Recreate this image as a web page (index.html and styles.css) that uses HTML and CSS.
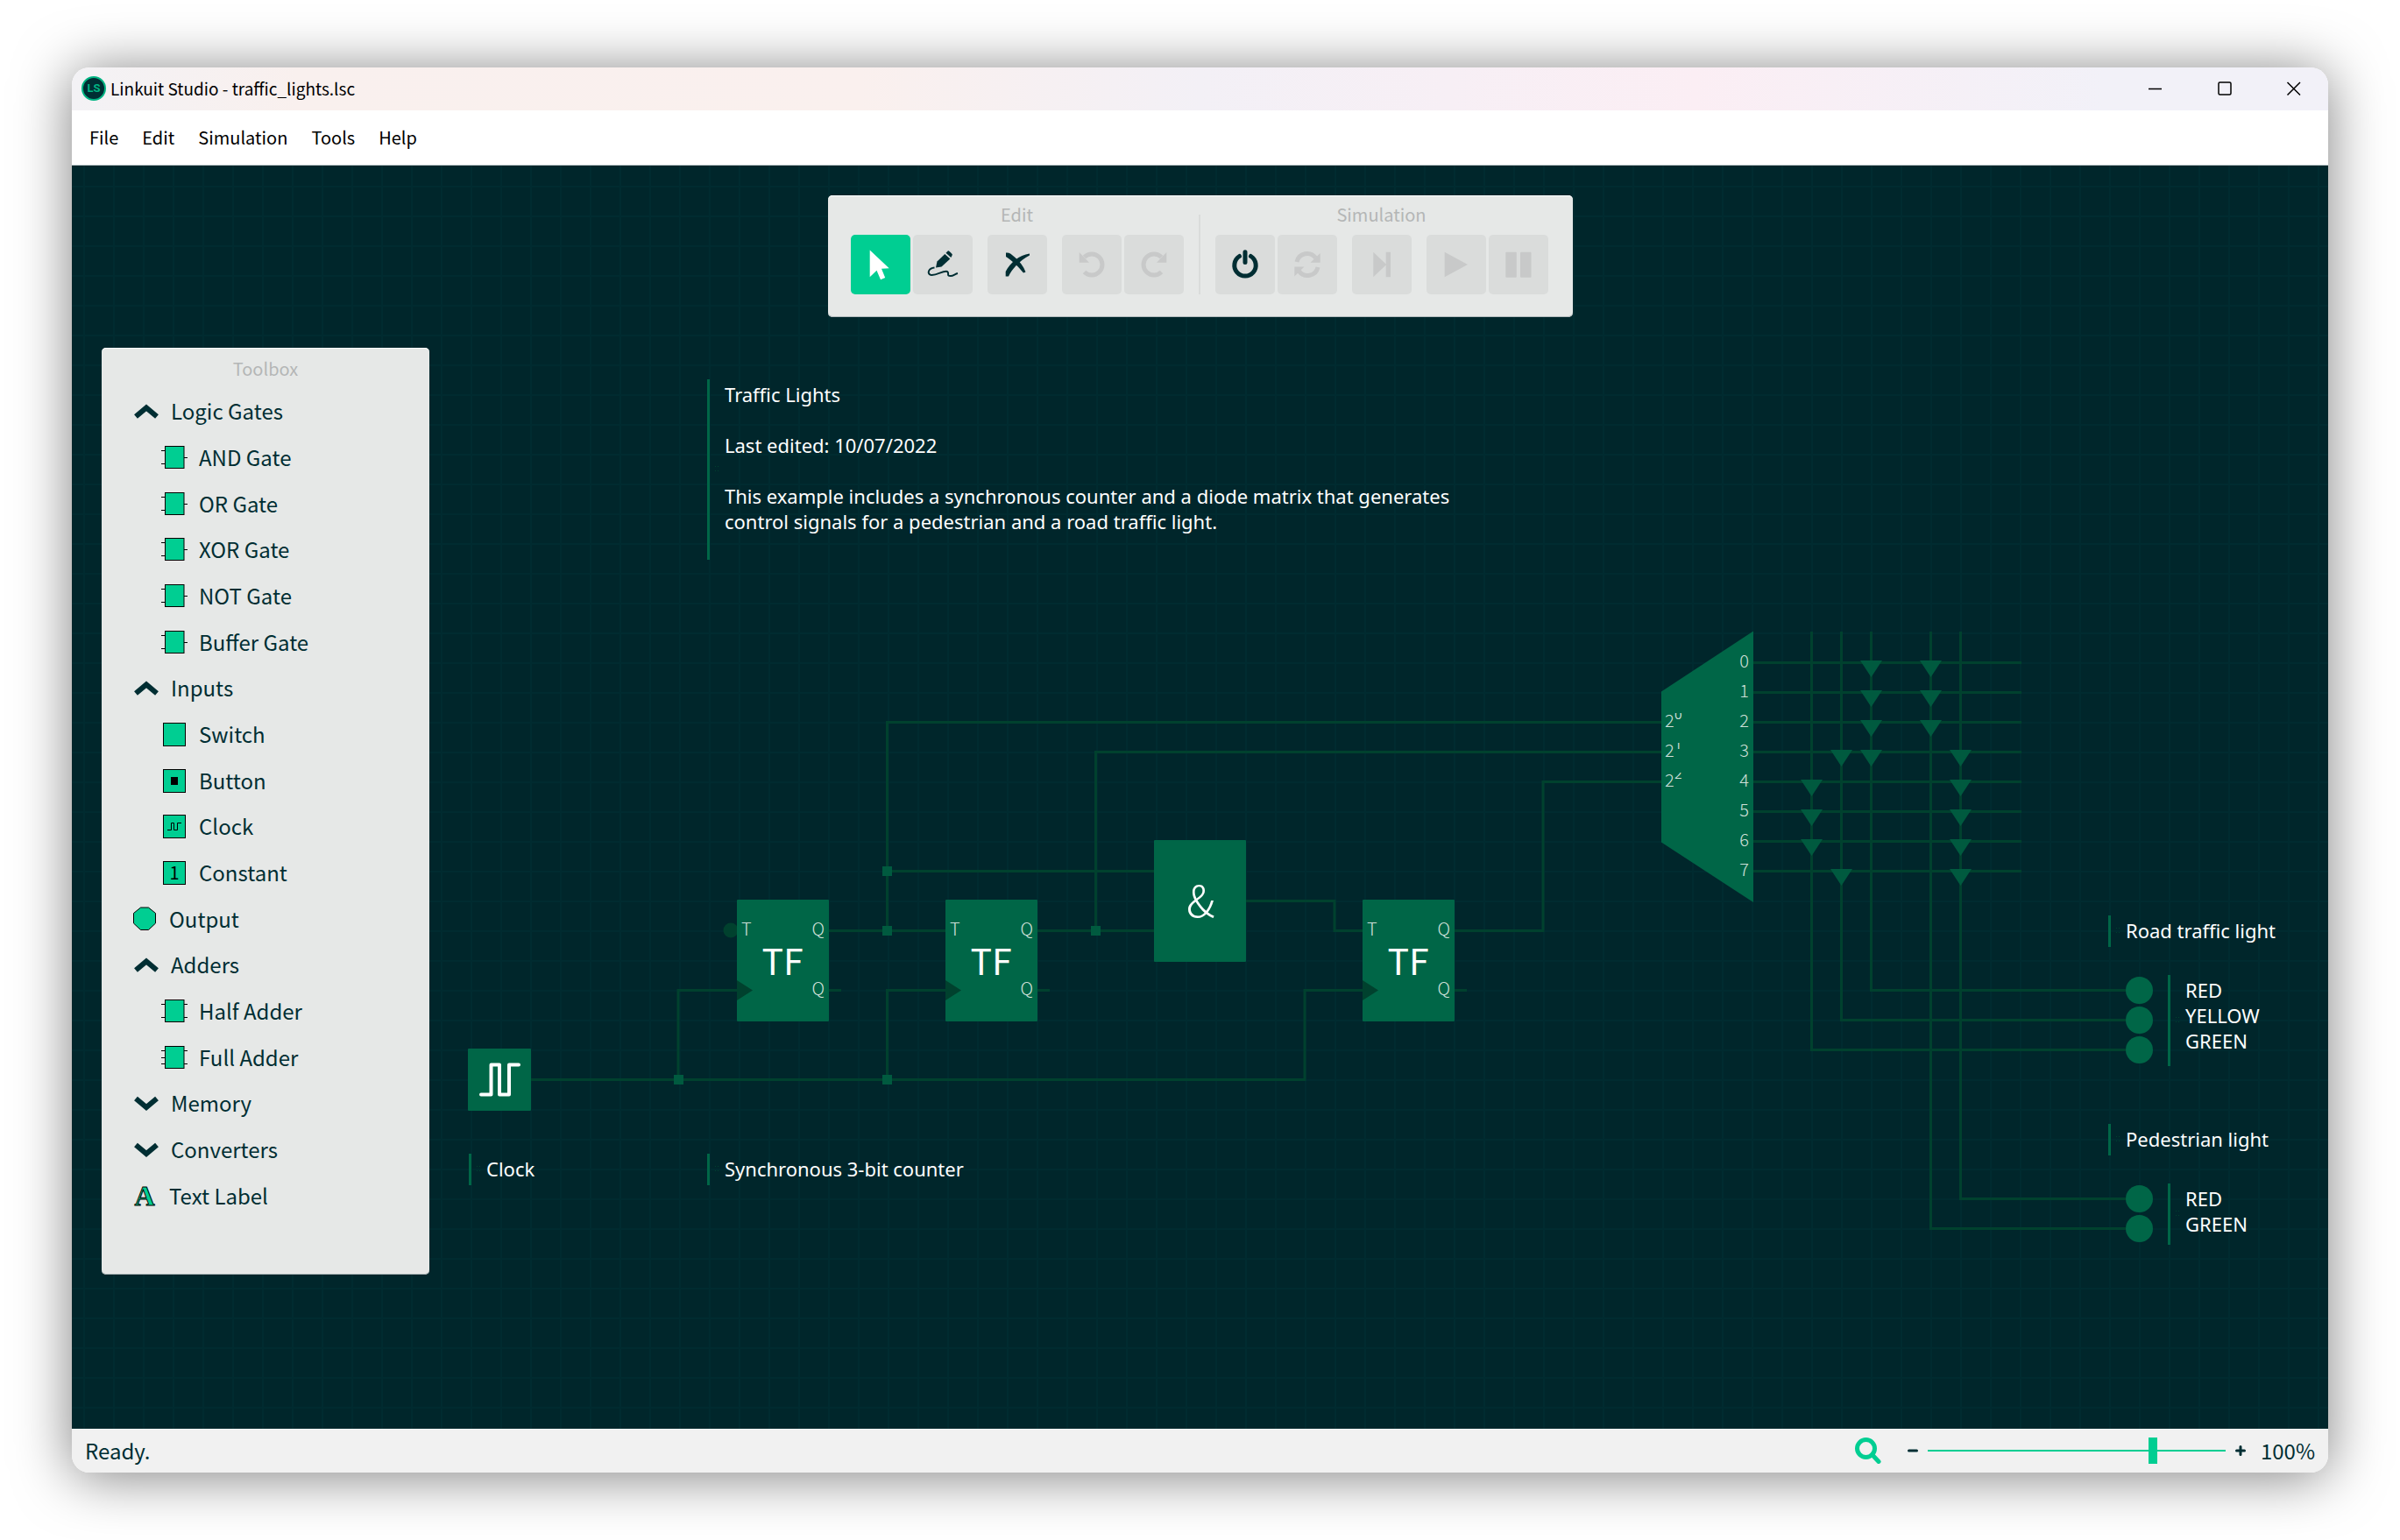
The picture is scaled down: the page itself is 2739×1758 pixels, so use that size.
FILE: index.html
```html
<!DOCTYPE html>
<html lang="en">
<head>
<meta charset="utf-8">
<title>Linkuit Studio - traffic_lights.lsc</title>
<link rel="stylesheet" href="styles.css">
</head>
<body>

<svg class="symbols" aria-hidden="true">
  <symbol id="i-up" viewBox="0 0 30 30"><path class="chevron" d="M3 21.500 15 11.500 27 21.500"/></symbol>
  <symbol id="i-down" viewBox="0 0 30 30"><path class="chevron" d="M3 10 15 20 27 10"/></symbol>
  <symbol id="i-gate" viewBox="0 0 30 30"><path class="legs" d="M0 7.500H5M0 22.500H5M26 15.500H31"/><rect class="chip" x="4.500" y="2.500" width="21.500" height="25"/></symbol>
  <symbol id="i-half" viewBox="0 0 30 30"><path class="legs" d="M0 7.500H31M0 22.500H31"/><rect class="chip" x="4.500" y="2.500" width="21.500" height="25"/></symbol>
  <symbol id="i-full" viewBox="0 0 30 30"><path class="legs" d="M0 7.500H31M0 15.500H5M0 22.500H31"/><rect class="chip" x="4.500" y="2.500" width="21.500" height="25"/></symbol>
  <symbol id="i-switch" viewBox="0 0 30 30"><rect class="chip" x="2.500" y="2.500" width="25" height="26"/></symbol>
  <symbol id="i-button" viewBox="0 0 30 30"><rect class="chip" x="2.500" y="2.500" width="25" height="26"/><rect x="11" y="11" width="8" height="9"/></symbol>
  <symbol id="i-clock" viewBox="0 0 30 30"><rect class="chip" x="2.500" y="2.500" width="25" height="26"/><path class="legs" d="M7 19.500H11.500V11.500H14.500V19.500H18.500V11.500H23"/></symbol>
  <symbol id="i-output" viewBox="0 0 28 30"><path class="chip" d="M8.500 2H17.500L25.500 8.500V20L17.500 27.500H8.500L.5 20V8.500Z"/></symbol>
  <symbol id="diode" viewBox="0 0 26 20" overflow="visible"><path class="node" d="M-12.500 0H12.500L0 19Z"/></symbol>
</svg>

<div class="window">
  <header class="titlebar">
    <svg class="logo" viewBox="0 0 28 28" aria-hidden="true">
      <circle cx="14" cy="14" r="13" class="logo-disc"/>
      <text x="14" y="18" text-anchor="middle" class="logo-text">LS</text>
    </svg>
    <h1 class="title">Linkuit Studio - traffic_lights.lsc</h1>
    <button class="caption" type="button" aria-label="Minimize"><svg viewBox="0 0 18 18"><path d="M1 9.500H16"/></svg></button>
    <button class="caption" type="button" aria-label="Maximize"><svg viewBox="0 0 18 18"><rect x="2" y="2" width="14" height="14" rx="1.500"/></svg></button>
    <button class="caption" type="button" aria-label="Close"><svg viewBox="0 0 18 18"><path d="M1.500 2 16 16.500M16 2 1.500 16.500"/></svg></button>
  </header>

  <nav class="menubar">
    <button type="button">File</button>
    <button type="button">Edit</button>
    <button type="button">Simulation</button>
    <button type="button">Tools</button>
    <button type="button">Help</button>
  </nav>

  <main class="workspace">
    <svg class="circuit" width="2575" height="1442" viewBox="82 189 2575 1442" role="img" aria-label="Traffic light circuit">
      <g class="wire">
        <path d="M606 1232.500H1489V1130.500H1555"/>
        <path d="M774 1232.500V1130.500H841"/>
        <path d="M1012.500 1232.500V1130.500H1079"/>
        <path d="M946 1062.500H1079M1184 1062.500H1317"/>
        <path d="M1012.500 1062.500V824.500H1896M1012.500 994.500H1317"/>
        <path d="M1250.500 1062.500V858.500H1896"/>
        <path d="M1422 1028.500H1523V1062.500H1555"/>
        <path d="M1660 1062.500H1761V892.500H1896"/>
        <path d="M946 1130.500H960M1184 1130.500H1198M1660 1130.500H1674"/>
        <path d="M2001 756.500H2307M2001 790.500H2307M2001 824.500H2307M2001 858.500H2307M2001 892.500H2307M2001 926.500H2307M2001 960.500H2307M2001 994.500H2307"/>
        <path d="M2067.500 721V1198.500H2426"/>
        <path d="M2101.500 721V1164.500H2426"/>
        <path d="M2135.500 721V1130.500H2426"/>
        <path d="M2203.500 721V1402.500H2426"/>
        <path d="M2237.500 721V1368.500H2426"/>
      </g>
      <circle class="dark" cx="834" cy="1062" r="8.500"/>
      <g class="node">
        <rect x="1007" y="989" width="11" height="11"/>
        <rect x="1007" y="1057" width="11" height="11"/>
        <rect x="1245" y="1057" width="11" height="11"/>
        <rect x="769" y="1227" width="11" height="11"/>
        <rect x="1007" y="1227" width="11" height="11"/>
      </g>
      <g>
        <use href="#diode" x="2135.500" y="754" width="26" height="20"/><use href="#diode" x="2203.500" y="754" width="26" height="20"/>
        <use href="#diode" x="2135.500" y="788" width="26" height="20"/><use href="#diode" x="2203.500" y="788" width="26" height="20"/>
        <use href="#diode" x="2135.500" y="822" width="26" height="20"/><use href="#diode" x="2203.500" y="822" width="26" height="20"/>
        <use href="#diode" x="2101.500" y="856" width="26" height="20"/><use href="#diode" x="2135.500" y="856" width="26" height="20"/><use href="#diode" x="2237.500" y="856" width="26" height="20"/>
        <use href="#diode" x="2067.500" y="890" width="26" height="20"/><use href="#diode" x="2237.500" y="890" width="26" height="20"/>
        <use href="#diode" x="2067.500" y="924" width="26" height="20"/><use href="#diode" x="2237.500" y="924" width="26" height="20"/>
        <use href="#diode" x="2067.500" y="958" width="26" height="20"/><use href="#diode" x="2237.500" y="958" width="26" height="20"/>
        <use href="#diode" x="2101.500" y="992" width="26" height="20"/><use href="#diode" x="2237.500" y="992" width="26" height="20"/>
      </g>

      <rect class="part" x="534" y="1197" width="72" height="71" rx="1"/>
      <path class="pulse" d="M549 1249.500H560.500V1215.500H570V1249.500H581V1215.500H592"/>

      <g transform="translate(841 1027)">
        <rect class="part" width="105" height="139" rx="1"/>
        <path class="dark" d="M0 92 18 103.500 0 115Z"/>
        <text class="pin" x="5" y="41">T</text>
        <text class="pin" x="100" y="41" text-anchor="end">Q</text>
        <text class="pin" x="100" y="109" text-anchor="end">Q</text>
        <text class="part-name" x="52" y="86" text-anchor="middle">TF</text>
      </g>
      <g transform="translate(1079 1027)">
        <rect class="part" width="105" height="139" rx="1"/>
        <path class="dark" d="M0 92 18 103.500 0 115Z"/>
        <text class="pin" x="5" y="41">T</text>
        <text class="pin" x="100" y="41" text-anchor="end">Q</text>
        <text class="pin" x="100" y="109" text-anchor="end">Q</text>
        <text class="part-name" x="52" y="86" text-anchor="middle">TF</text>
      </g>
      <g transform="translate(1555 1027)">
        <rect class="part" width="105" height="139" rx="1"/>
        <path class="dark" d="M0 92 18 103.500 0 115Z"/>
        <text class="pin" x="5" y="41">T</text>
        <text class="pin" x="100" y="41" text-anchor="end">Q</text>
        <text class="pin" x="100" y="109" text-anchor="end">Q</text>
        <text class="part-name" x="52" y="86" text-anchor="middle">TF</text>
      </g>

      <rect class="part" x="1317" y="959" width="105" height="139" rx="1"/>
      <text class="part-sign" x="1370" y="1047" text-anchor="middle">&amp;</text>

      <path class="part" d="M1896 789.500 2001 720.500V1030L1896 961.500Z"/>
      <g class="pin" text-anchor="end">
        <text x="1996" y="762">0</text>
        <text x="1996" y="796">1</text>
        <text x="1996" y="830">2</text>
        <text x="1996" y="864">3</text>
        <text x="1996" y="898">4</text>
        <text x="1996" y="932">5</text>
        <text x="1996" y="966">6</text>
        <text x="1996" y="1000">7</text>
      </g>
      <g class="pin">
        <text x="1900" y="830">2</text>
        <text x="1900" y="864">2</text>
        <text x="1900" y="898">2</text>
      </g>
      <clipPath id="exponents"><path d="M1911 814h14v10h-14zM1911 848h14v10h-14zM1911 882h14v10h-14z"/></clipPath>
      <g class="exponent" clip-path="url(#exponents)">
        <text x="1911" y="821">0</text>
        <text x="1911" y="855">1</text>
        <text x="1911" y="889">2</text>
      </g>

      <g class="part">
        <circle cx="2441.500" cy="1130.500" r="15.500"/>
        <circle cx="2441.500" cy="1164.500" r="15.500"/>
        <circle cx="2441.500" cy="1198.500" r="15.500"/>
        <circle cx="2441.500" cy="1368.500" r="15.500"/>
        <circle cx="2441.500" cy="1402.500" r="15.500"/>
      </g>
    </svg>

    <div class="note note-about"><p>Traffic Lights</p><p>Last edited: 10/07/2022</p><p>This example includes a synchronous counter and a diode matrix that generates<br>control signals for a pedestrian and a road traffic light.</p></div>
    <div class="note note-clock"><p>Clock</p></div>
    <div class="note note-counter"><p>Synchronous 3-bit counter</p></div>
    <div class="note note-road"><p>Road traffic light</p></div>
    <div class="note note-road-lamps"><p>RED<br>YELLOW<br>GREEN</p></div>
    <div class="note note-walk"><p>Pedestrian light</p></div>
    <div class="note note-walk-lamps"><p>RED<br>GREEN</p></div>

    <section class="panel toolbar" aria-label="Toolbar">
      <div class="group">
        <h2 class="caption-text">Edit</h2>
        <div class="tools">
          <button class="tool active" type="button" aria-label="Select"><svg viewBox="0 0 68 68"><path d="M21.700 17.500 43.700 38.200 35 38.800 39.200 49 34 51.200 29.500 40.700 21.700 48.300Z"/></svg></button>
          <button class="tool" type="button" aria-label="Draw wire"><svg viewBox="0 0 68 68"><path d="M36.300 22 42.300 27.500 32.500 36.500 26 37.500 27.500 30.500Z"/><path d="M37.500 20.700 40 18.300Q41 18 44.800 22.300 45 23.300 43.300 26Z"/><path class="stroke-thin" d="M24.500 37.500C18 38 15.500 44 20 45.800 27 47 34 40.500 39 42 42 43.500 37.500 47 43 47 46 47 48 44.500 51 44"/></svg></button>
          <button class="tool apart" type="button" aria-label="Delete"><svg viewBox="0 0 68 68"><path d="M21 20.500C25 20 27 22 31 25.500 37 30.500 41 36 43.500 42.500L41 43.500C36 37.500 29 30 21 25Z"/><path d="M48 21.500C36 23 26 32 20.700 42V47.500H24C28 39 36 30 48 23.500Z"/></svg></button>
          <button class="tool apart" type="button" aria-label="Undo" disabled><svg viewBox="0 0 68 68"><path class="stroke" d="M25.500 25.500A12 12 0 1 1 25.500 42.500"/><path d="M19.700 20 31 31.700H19.700Z"/></svg></button>
          <button class="tool" type="button" aria-label="Redo" disabled><svg viewBox="0 0 68 68"><path class="stroke" d="M42.500 25.500A12 12 0 1 0 42.500 42.500"/><path d="M48.300 20 37 31.700H48.300Z"/></svg></button>
        </div>
      </div>
      <div class="divider"></div>
      <div class="group">
        <h2 class="caption-text">Simulation</h2>
        <div class="tools">
          <button class="tool" type="button" aria-label="Start simulation"><svg viewBox="0 0 68 68"><path class="stroke round" d="M27.500 24.500A12.200 12.200 0 1 0 40.500 24.500M34 19.700V31.500"/></svg></button>
          <button class="tool" type="button" aria-label="Reset" disabled><svg viewBox="0 0 68 68"><path class="stroke" d="M22 31A12 12 0 0 1 43.500 26.500M46 37A12 12 0 0 1 24.500 41.500"/><path d="M48.700 21V31.700H37.500ZM19.300 47.500V36.500H30.500Z"/></svg></button>
          <button class="tool apart" type="button" aria-label="Step" disabled><svg viewBox="0 0 68 68"><path d="M24.300 19.700 39.300 34 24.300 48.300ZM38.700 19.700H44V48.300H38.700Z"/></svg></button>
          <button class="tool apart" type="button" aria-label="Run" disabled><svg viewBox="0 0 68 68"><path d="M20.700 19.700 47 34 20.700 48.300Z"/></svg></button>
          <button class="tool" type="button" aria-label="Pause" disabled><svg viewBox="0 0 68 68"><rect x="19.300" y="19.700" width="12.500" height="29" rx="1"/><rect x="36" y="19.700" width="12.500" height="29" rx="1"/></svg></button>
        </div>
      </div>
    </section>

    <aside class="panel toolbox">
      <h2 class="caption-text">Toolbox</h2>
      <ul class="tree">
        <li><button class="row" type="button" aria-expanded="true"><svg><use href="#i-up"/></svg>Logic Gates</button></li>
        <li><button class="row child" type="button"><svg><use href="#i-gate"/></svg>AND Gate</button></li>
        <li><button class="row child" type="button"><svg><use href="#i-gate"/></svg>OR Gate</button></li>
        <li><button class="row child" type="button"><svg><use href="#i-gate"/></svg>XOR Gate</button></li>
        <li><button class="row child" type="button"><svg><use href="#i-gate"/></svg>NOT Gate</button></li>
        <li><button class="row child" type="button"><svg><use href="#i-gate"/></svg>Buffer Gate</button></li>
        <li><button class="row" type="button" aria-expanded="true"><svg><use href="#i-up"/></svg>Inputs</button></li>
        <li><button class="row child" type="button"><svg><use href="#i-switch"/></svg>Switch</button></li>
        <li><button class="row child" type="button"><svg><use href="#i-button"/></svg>Button</button></li>
        <li><button class="row child" type="button"><svg><use href="#i-clock"/></svg>Clock</button></li>
        <li><button class="row child" type="button"><svg viewBox="0 0 30 30"><rect class="chip" x="2.500" y="2.500" width="25" height="26"/><text class="chip-digit" x="15" y="23" text-anchor="middle">1</text></svg>Constant</button></li>
        <li><button class="row leaf" type="button"><svg><use href="#i-output"/></svg>Output</button></li>
        <li><button class="row" type="button" aria-expanded="true"><svg><use href="#i-up"/></svg>Adders</button></li>
        <li><button class="row child" type="button"><svg><use href="#i-half"/></svg>Half Adder</button></li>
        <li><button class="row child" type="button"><svg><use href="#i-full"/></svg>Full Adder</button></li>
        <li><button class="row" type="button" aria-expanded="false"><svg><use href="#i-down"/></svg>Memory</button></li>
        <li><button class="row" type="button" aria-expanded="false"><svg><use href="#i-down"/></svg>Converters</button></li>
        <li><button class="row leaf" type="button"><svg viewBox="0 0 28 30"><text class="chip-letter" x="13" y="26" text-anchor="middle">A</text></svg>Text Label</button></li>
      </ul>
    </aside>
  </main>

  <footer class="statusbar">
    <span class="status">Ready.</span>
    <label class="zoom-icon" for="zoom" aria-label="Zoom"><svg viewBox="0 0 30 30"><circle cx="12.500" cy="12.500" r="10"/><path d="M19.500 19.500 27 27.500"/></svg></label>
    <button class="zoom-step" type="button" aria-label="Zoom out"><svg viewBox="0 0 12 12"><path d="M1.500 6H10.500"/></svg></button>
    <input class="zoom" id="zoom" type="range" min="0" max="1000" value="764">
    <button class="zoom-step" type="button" aria-label="Zoom in"><svg viewBox="0 0 12 12"><path d="M1.500 6H10.500M6 1.500V10.500"/></svg></button>
    <output class="zoom-value" for="zoom">100%</output>
  </footer>
</div>
</body>
</html>
```
FILE: styles.css
```css
:root {
  --ink: #002e33;
  --accent: #00ce92;
  --canvas: #00262b;
  --grid: #002b30;
  --wire: #00412e;
  --part: #006647;
  --node: #005a3f;
  --panel: #e6e8e7;
  --ui: "Noto Sans CJK JP", "Noto Sans", sans-serif;
}

* { box-sizing: border-box; }

body {
  margin: 0;
  padding: 77px 82px;
  min-height: 100vh;
  display: flex;
  background: #fff;
  color: var(--ink);
  font-family: var(--ui);
}

button {
  margin: 0;
  padding: 0;
  border: 0;
  background: none;
  color: inherit;
  font: inherit;
}

h1, h2, p, ul { margin: 0; padding: 0; font-weight: 400; }

svg { display: block; flex: none; }

.symbols { position: absolute; width: 0; height: 0; }

.window {
  flex: 1;
  min-width: 0;
  display: flex;
  flex-direction: column;
  overflow: hidden;
  border-radius: 20px;
  box-shadow: 0 4px 64px rgba(0, 0, 0, .5);
}

/* Title bar */
.titlebar {
  display: flex;
  align-items: center;
  height: 49px;
  padding: 0 0 2px 11px;
  background: linear-gradient(90deg, #f3f2f5 0, #f9f0ee 10%, #faf0ee 35%, #f3f0f6 50%, #fbeef4 72%, #f2f1f8 90%);
}

.logo { width: 28px; height: 28px; }
.logo-disc { fill: var(--ink); stroke: #00b583; stroke-width: 2; }
.logo-text { fill: #00b583; font: 700 13px Roboto, sans-serif; }

.title {
  flex: 1;
  margin-left: 5px;
  color: #000;
  font-size: 19px;
  line-height: 24px;
}

.caption {
  width: 79px;
  height: 47px;
  display: grid;
  place-items: center;
}

.caption svg { width: 18px; height: 18px; fill: none; stroke: #000; stroke-width: 1.500; }

/* Menu */
.menubar {
  display: flex;
  align-items: center;
  gap: 27px;
  height: 63px;
  padding-left: 20px;
  border-bottom: 1px solid #c0c9ca;
  background: #fff;
  color: #000;
  font-size: 20px;
  line-height: 24px;
}

/* Canvas */
.workspace {
  position: relative;
  flex: 1;
  min-height: 1442px;
  overflow: hidden;
  padding: 34px;
  background-color: var(--canvas);
  background-image:
    linear-gradient(90deg, var(--grid) 2px, transparent 2px),
    linear-gradient(var(--grid) 2px, transparent 2px);
  background-size: 34px 34px;
  background-position: 13px 23px;
}

.circuit { position: absolute; left: 0; top: 0; }
.wire { fill: none; stroke: var(--wire); stroke-width: 3; }
.dark { fill: var(--wire); }
.node { fill: var(--node); }
.part { fill: var(--part); }
.pulse { fill: none; stroke: #fff; stroke-width: 4; stroke-linejoin: round; stroke-linecap: round; }
.pin { fill: #d0e0da; font: 300 20px var(--ui); }
.exponent { fill: #d0e0da; font: 400 15px "Open Sans", sans-serif; }
.part-name { fill: #fff; font: 400 41px var(--ui); }
.part-sign { fill: #fff; font: 300 50px var(--ui); }

.note {
  position: absolute;
  padding: 3px 0 4px 17px;
  border-left: 3px solid var(--part);
  color: #fff;
  font: 22px/29px "Noto Sans", sans-serif;
  white-space: nowrap;
}

.note p + p { margin-top: 29px; }

/* drag handle */
.note::before {
  content: "";
  position: absolute;
  left: 5px;
  top: calc(50% - 6px);
  width: 6px;
  height: 12px;
  background: radial-gradient(circle, var(--wire) 1px, transparent 1px) 0 0 / 3px 5px;
}

.note-about { left: 725px; top: 244px; height: 206px; }
.note-clock { left: 453px; top: 1128px; }
.note-counter { left: 725px; top: 1128px; }
.note-road { left: 2324px; top: 856px; }
.note-road-lamps { left: 2392px; top: 924px; height: 104px; }
.note-walk { left: 2324px; top: 1094px; }
.note-walk-lamps { left: 2392px; top: 1162px; height: 70px; }

/* Floating panels */
.panel {
  position: relative;
  border-radius: 5px;
  background: var(--panel);
  box-shadow: inset 0 1px #fff, inset 0 -1px #b4bcbd;
}

.caption-text {
  color: #b4b6b6;
  font-size: 20px;
  line-height: 24px;
  text-align: center;
}

.toolbar {
  width: max-content;
  margin: 0 auto;
  display: flex;
  gap: 17px;
  padding: 10px 28px 26px 26px;
}

.group { display: grid; gap: 11px; }
.tools { display: flex; gap: 3px; }
.divider { width: 2px; margin-top: 12px; background: #dadcdb; }

.tool {
  width: 68px;
  height: 68px;
  border-radius: 5px;
  background: #dadcdb;
}

.tool.active { background: var(--accent); color: #fff; }
.tool:disabled { color: #c8c9c9; }
.tool.apart { margin-left: 14px; }
.tool svg { width: 68px; height: 68px; fill: currentColor; }
.tool .stroke, .tool .stroke-thin { fill: none; stroke: currentColor; stroke-width: 5; }
.tool .stroke-thin { stroke-width: 2; }
.tool .round { stroke-linecap: round; }

.toolbox {
  width: 374px;
  margin-top: 35px;
  padding: 12px 0 64px;
}

.tree {
  display: grid;
  grid-auto-rows: 1fr;
  min-height: 948px;
  margin-top: 10px;
  list-style: none;
}

.row {
  display: flex;
  align-items: center;
  gap: 13px;
  width: 100%;
  height: 100%;
  padding-left: 36px;
  font-size: 24px;
  line-height: 32px;
  text-align: left;
}

.row.child { padding-left: 68px; }
.row svg { width: 30px; height: 30px; overflow: visible; }
.row.leaf svg { width: 28px; }

.chevron { fill: none; stroke: var(--ink); stroke-width: 6; }
.legs { fill: none; stroke: #000; stroke-width: 1; }
.chip { fill: var(--accent); stroke: #000; stroke-width: 1; }
.chip-digit { font: 20px var(--ui); }
.chip-letter { fill: var(--accent); stroke: #000; stroke-width: 1; font: 700 32px "Liberation Serif", serif; }

/* Status bar */
.statusbar {
  display: flex;
  align-items: center;
  height: 50px;
  padding: 0 15px 2px;
  border-top: 1px solid #fff;
  background: #f1f1f1;
  font-size: 24px;
  line-height: 32px;
}

.status { flex: 1; }
.zoom-icon { margin-right: 30px; }
.zoom-icon svg { width: 30px; height: 30px; fill: none; stroke: var(--accent); stroke-width: 5; stroke-linecap: round; }
.zoom-step svg { width: 12px; height: 12px; fill: none; stroke: var(--ink); stroke-width: 3; stroke-linecap: round; }

.zoom {
  width: 340px;
  height: 30px;
  margin: 0 11px;
  appearance: none;
  background: linear-gradient(var(--accent), var(--accent)) center / 100% 2px no-repeat;
}

.zoom::-webkit-slider-thumb {
  appearance: none;
  width: 10px;
  height: 30px;
  background: var(--accent);
}

.zoom-value { margin-left: 17px; }
```
